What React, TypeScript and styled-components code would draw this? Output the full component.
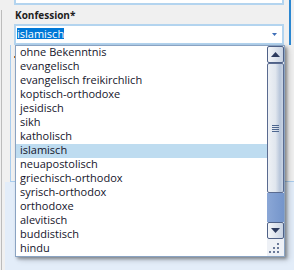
import React from "react";
import styled, { createGlobalStyle } from "styled-components";

const Global = createGlobalStyle`
  html, body { margin: 0; padding: 0; background: #f0f0f0; }
  body { width: 294px; height: 270px; overflow: hidden; font-family: "Open Sans", "Noto Sans", sans-serif; }
  * { box-sizing: border-box; }
`;

const Screen = styled.div`
  width: 294px;
  height: 270px;
  overflow: hidden;
  display: flex;
  background: #f0f0f0;
`;

const Rail = styled.div`
  width: 5px;
  flex: none;
  display: flex;
  flex-direction: column;
  padding-top: 10px;
  padding-left: 1px;
`;

const RailLine = styled.div`
  flex: 1;
  width: 1px;
  background: #bcbcbc;
`;

const Main = styled.div`
  flex: 1;
  display: flex;
  flex-direction: column;
  min-width: 0;
`;

const Upper = styled.div`
  display: flex;
  flex-direction: column;
  padding-left: 9px;
  width: 286px;
  height: 45px;
  flex: none;
  border-right: 2px solid #2b87d1;
  position: relative;
  z-index: 2;
`;

const TopField = styled.div`
  width: 270px;
  height: 5px;
  background: #fff;
  border: 2px solid #b3d4ef;
  border-top: none;
`;

const Label = styled.div`
  height: 19px;
  padding: 2px 0 0 1px;
  font-size: 10px;
  font-weight: 700;
  line-height: 17px;
  color: #1e1e1e;
`;

const SelectField = styled.div`
  position: relative;
  width: 270px;
`;

const SelectBox = styled.div`
  height: 21px;
  border: 2px solid #b3d4ef;
  background: #fff;
  display: flex;
  align-items: flex-start;
  padding: 2px 0 0 1px;
`;

const SelectedText = styled.span`
  display: inline-block;
  height: 11px;
  line-height: 11px;
  font-size: 11px;
  background: #0078d7;
  color: #fff;
`;

const Caret = styled.svg`
  margin-left: auto;
  margin-right: 5px;
  margin-top: 5px;
  flex: none;
`;

const Dropdown = styled.div`
  position: absolute;
  top: 100%;
  left: 1px;
  width: 270px;
  height: 212px;
  display: flex;
  background: #fff;
  border: 1px solid #8aa3c2;
  box-shadow: 2px 2px 3px rgba(0, 0, 0, 0.35), 4px 3px 6px rgba(0, 0, 0, 0.15);
`;

const Options = styled.div`
  width: 251px;
  display: flex;
  flex-direction: column;
`;

const Option = styled.div<{ $active?: boolean }>`
  height: 14px;
  padding: 0 0 2px 4px;
  line-height: 12px;
  font-size: 11px;
  color: #15152b;
  white-space: nowrap;
  background: ${(p) => (p.$active ? "#bedcf0" : "transparent")};
`;

const ScrollBar = styled.div`
  width: 17px;
  display: flex;
  flex-direction: column;
  background: #eef1f6;
`;

const ScrollButton = styled.div`
  height: 17px;
  flex: none;
  border: 1px solid #4f6187;
  border-radius: 2px;
  background: linear-gradient(to right, #f4f6f9 0%, #e2e7ef 45%, #c8d3e3 100%);
  display: flex;
  align-items: center;
  justify-content: center;
`;

const Thumb = styled.div`
  height: 130px;
  flex: none;
  border: 1px solid #5a6b90;
  border-radius: 2px;
  background: linear-gradient(to right, #eef1f5 0%, #e0e6ee 50%, #b7c5da 80%, #c9d4e3 100%);
  display: flex;
  align-items: center;
  justify-content: center;
`;

const Track = styled.div`
  height: 29px;
  flex: none;
  background: linear-gradient(to right, #8ba7d6, #7495cb);
`;

const SizeGrip = styled.div`
  flex: 1;
  display: flex;
`;

const Lower = styled.div`
  flex: 1;
  display: flex;
  flex-direction: column;
`;

const BackPanel = styled.div`
  margin-left: 5px;
  height: 137px;
  flex: none;
  border-left: 1px solid #a9cdee;
  border-bottom: 1px solid #a9cdee;
  padding: 11px 0 0 3px;
`;

const Mark = styled.span`
  display: block;
  width: 2px;
  height: 2px;
  background: #b86a1e;
`;

const LowerFill = styled.div`
  flex: 1;
  background: #e3edf9;
`;

const items = [
  "ohne Bekenntnis",
  "evangelisch",
  "evangelisch freikirchlich",
  "koptisch-orthodoxe",
  "jesidisch",
  "sikh",
  "katholisch",
  "islamisch",
  "neuapostolisch",
  "griechisch-orthodox",
  "syrisch-orthodox",
  "orthodoxe",
  "alevitisch",
  "buddistisch",
  "hindu",
];

export default function App() {
  return (
    <>
      <Global />
      <Screen>
        <Rail>
          <RailLine />
        </Rail>
        <Main>
          <Upper>
            <TopField />
            <Label>Konfession*</Label>
            <SelectField>
              <SelectBox>
                <SelectedText>islamisch</SelectedText>
                <Caret width="5" height="3" viewBox="0 0 5 3">
                  <polygon points="0,0 5,0 2.5,3" fill="#3f6fb8" />
                </Caret>
              </SelectBox>
              <Dropdown>
                <Options>
                  {items.map((it) => (
                    <Option key={it} $active={it === "islamisch"}>
                      {it}
                    </Option>
                  ))}
                </Options>
                <ScrollBar>
                  <ScrollButton>
                    <svg width="9" height="5" viewBox="0 0 9 5">
                      <polygon points="0,5 4.5,0 9,5" fill="#2d3b5e" />
                    </svg>
                  </ScrollButton>
                  <Thumb>
                    <svg width="7" height="7" viewBox="0 0 7 7">
                      <g fill="#4e6790">
                        <rect x="0" y="0" width="7" height="1" />
                        <rect x="0" y="2" width="7" height="1" />
                        <rect x="0" y="4" width="7" height="1" />
                        <rect x="0" y="6" width="7" height="1" />
                      </g>
                    </svg>
                  </Thumb>
                  <Track />
                  <ScrollButton>
                    <svg width="9" height="5" viewBox="0 0 9 5">
                      <polygon points="0,0 9,0 4.5,5" fill="#2d3b5e" />
                    </svg>
                  </ScrollButton>
                  <SizeGrip>
                    <svg width="17" height="17" viewBox="0 0 17 17">
                      <g fill="#6b7a99">
                        <rect x="10" y="4" width="2" height="2" />
                        <rect x="6" y="8" width="2" height="2" />
                        <rect x="10" y="8" width="2" height="2" />
                        <rect x="2" y="12" width="2" height="2" />
                        <rect x="6" y="12" width="2" height="2" />
                        <rect x="10" y="12" width="2" height="2" />
                      </g>
                    </svg>
                  </SizeGrip>
                </ScrollBar>
              </Dropdown>
            </SelectField>
          </Upper>
          <Lower>
            <BackPanel>
              <Mark />
            </BackPanel>
            <LowerFill />
          </Lower>
        </Main>
      </Screen>
    </>
  );
}
